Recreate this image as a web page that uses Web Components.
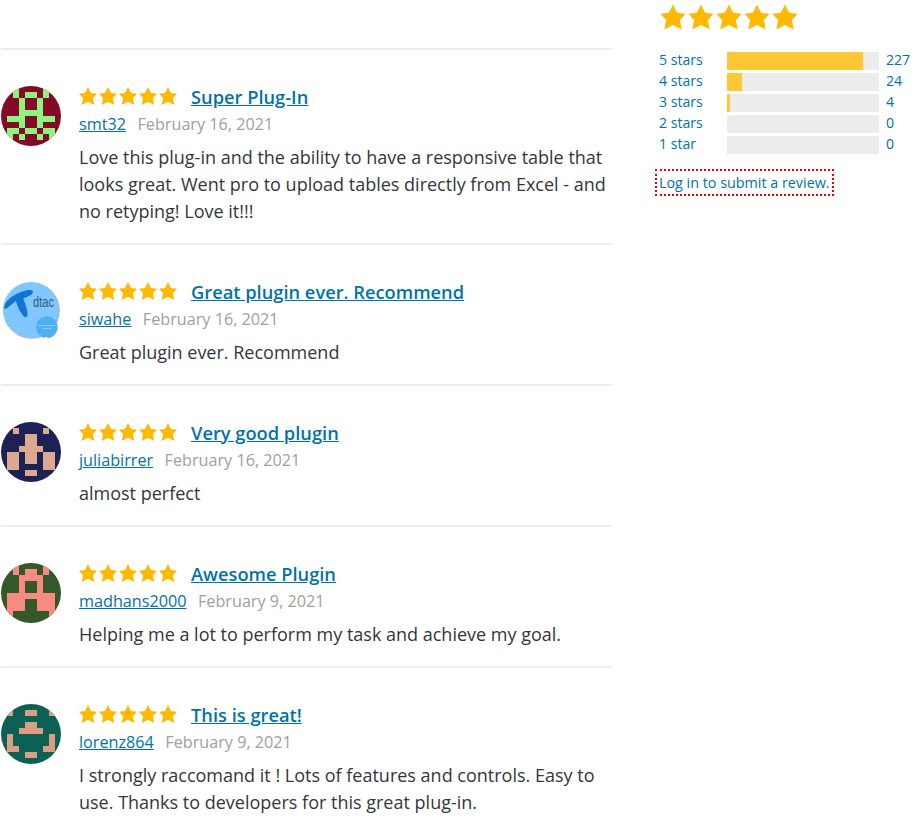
<!DOCTYPE html>
<html lang="en"><head><meta charset="utf-8"><title>Reviews</title>
<style>
html,body{margin:0;padding:0;background:#fff}
body{font-family:"Open Sans","Noto Sans",sans-serif;color:#32373c;overflow-x:hidden}
</style></head><body>
<reviews-page>
  <review-list slot="main">
    <review-item title-text="Super Plug-In" author="smt32" date="February 16, 2021">
      <grid-avatar slot="avatar" bg="#840b28" fg="#8cf47f" rows="..#....#..|..#.##.#..|...#..#...|...#..#...|...####...|.###..###.|...#..#...|.##.##.##.|.#.#..#.#.|.........."></grid-avatar>
      Love this plug-in and the ability to have a responsive table that looks great. Went pro to upload tables directly from Excel - and no retyping! Love it!!!
    </review-item>
    <review-item title-text="Great plugin ever. Recommend" author="siwahe" date="February 16, 2021">
      <logo-avatar slot="avatar"></logo-avatar>
      Great plugin ever. Recommend
    </review-item>
    <review-item title-text="Very good plugin" author="juliabirrer" date="February 16, 2021">
      <grid-avatar slot="avatar" bg="#1e2153" fg="#dca88f" rows="..........|..#....#..|....##....|....##....|...####...|.##.##.##.|.##.##.##.|.##....##.|....##....|.........."></grid-avatar>
      almost perfect
    </review-item>
    <review-item title-text="Awesome Plugin" author="madhans2000" date="February 9, 2021">
      <grid-avatar slot="avatar" bg="#33592b" fg="#f98a82" rows="..#....#..|..#.##.#..|...####...|...#..#...|...#..#...|.########.|.###..###.|.###..###.|.#......#.|.........."></grid-avatar>
      Helping me a lot to perform my task and achieve my goal.
    </review-item>
    <review-item title-text="This is great!" author="lorenz864" date="February 9, 2021">
      <grid-avatar slot="avatar" bg="#0d6054" fg="#d99e84" rows="..........|.#..##..#.|..........|....##....|...####...|.#......#.|.#......#.|.##....##.|....##....|.........."></grid-avatar>
      I strongly raccomand it ! Lots of features and controls. Easy to use. Thanks to developers for this great plug-in.
    </review-item>
  </review-list>
  <review-sidebar slot="side">
    <star-row size="28" pitch="28"></star-row>
    <rating-bar label="5 stars" count="227" width="136"></rating-bar>
    <rating-bar label="4 stars" count="24" width="15"></rating-bar>
    <rating-bar label="3 stars" count="4" width="3"></rating-bar>
    <rating-bar label="2 stars" count="0" width="0"></rating-bar>
    <rating-bar label="1 star" count="0" width="0"></rating-bar>
  </review-sidebar>
</reviews-page>
<script>
function def(name, css, html, init){
  customElements.define(name, class extends HTMLElement{
    connectedCallback(){
      if(this.shadowRoot) return;
      const r=this.attachShadow({mode:'open'});
      r.innerHTML='<style>'+css+'</style>'+(typeof html==='function'?html(this):html);
      if(init) init(this,r);
    }
  });
}
const A=(e,n)=>e.getAttribute(n)||'';
const STAR='M10 1l3 6 6 .75-4.12 4.62L16.25 19 10 15.75 3.75 19l1.37-6.63L1 7.75 7 7z';
def('reviews-page',
  ':host{display:grid;grid-template-columns:612px 253px;column-gap:47px;width:912px;align-items:start}',
  '<slot name="main"></slot><slot name="side"></slot>');
def('review-list',
  ':host{display:block;padding-top:48px;padding-left:1px;box-sizing:border-box;width:612px}','<slot></slot>');
def('review-item',
  `:host{display:flex;border-top:2px solid #eee;padding:36px 0 18px;font-size:18px;line-height:27px;color:#32373c;box-sizing:border-box}
   .av{flex:0 0 78px;height:60px}
   .body{flex:1;min-width:0}
   .top{display:flex;align-items:center;height:27px;margin-top:-2px}
   .top star-row{margin:0 0 4px -1px}
   .title{margin:0 0 2px 13px;font-size:18.27px;font-weight:600;color:#0073aa;text-decoration:underline}
   .meta{font-size:16.2px;line-height:27px;color:#a0a0a0;display:flex;gap:11.5px}
   .meta a{color:#0073aa;text-decoration:underline}
   .text{margin-top:6px}`,
  e=>`<div class="av"><slot name="avatar"></slot></div><div class="body">
    <div class="top"><star-row size="20" pitch="20"></star-row><a class="title" href="#">${A(e,'title-text')}</a></div>
    <div class="meta"><a href="#">${A(e,'author')}</a><span>${A(e,'date')}</span></div>
    <div class="text"><slot></slot></div></div>`);
def('star-row',
  ':host{display:inline-flex;flex:none;color:#ffb900}svg{display:block;flex:none}',
  e=>{const s=+A(e,'size');let o='';for(let i=0;i<5;i++)o+=`<svg width="${s}" height="${s}" viewBox="0 0 20 20"><path fill="currentColor" d="${STAR}"/></svg>`;return o;});
def('grid-avatar',
  ':host{display:block;width:60px;height:60px}svg{display:block}',
  e=>{const rows=A(e,'rows').split('|');let o='';rows.forEach((r,y)=>[...r].forEach((c,x)=>{if(c==='#')o+=`<rect x="${x*6}" y="${y*6}" width="6" height="6"/>`;}));
    const id='c'+Math.random().toString(36).slice(2);
    return `<svg width="60" height="60" viewBox="0 0 60 60"><defs><clipPath id="${id}"><circle cx="30" cy="30" r="30"/></clipPath></defs><g clip-path="url(#${id})"><rect width="60" height="60" fill="${A(e,'bg')}"/><g fill="${A(e,'fg')}" shape-rendering="crispEdges">${o}</g></g></svg>`;});
def('logo-avatar',
  `:host{display:block;width:60px;height:60px}svg{display:block}text{font-family:"Liberation Sans",sans-serif}`,
  `<svg width="60" height="60" viewBox="0 0 60 60">
    <circle cx="30.6" cy="29.6" r="28.2" fill="#b0b4b8"/>
    <circle cx="30" cy="29" r="28" fill="#80c6ff"/>
    <path d="M3 26.5C4 21 8 17 15.5 13C21 10 28 8 31 9.5C33 11 31.5 13.5 29 14.5C26 16 24 16.5 22.3 17.5C23.5 21 26 27 26.5 32C26.8 36 25 37 23.5 36C20 33 16.5 26 15 20C12 22 9 25 6.5 27C4.5 28 3 28 3 26.5Z" fill="#1274d4"/>
    <text x="32" y="26" font-size="14" fill="#2f5a7c" textLength="21" lengthAdjust="spacingAndGlyphs">dtac</text>
    <path d="M45.7 35.3a11 11 0 0 1 11 11c0 5-4 10-9 10.7l-3-1.2-2.5 1.2-2-1.5a11 11 0 0 1 5.5-20.2z" fill="#4cb0f2"/>
    <rect x="37.5" y="44" width="17" height="1" fill="#8fcff6"/>
    <rect x="42" y="47" width="8" height="1" fill="#8fcff6"/>
   </svg>`);
def('review-sidebar',
  `:host{display:block;padding-top:3px;font-size:14px}
   .stars{height:47px}
   .login{display:inline-block;margin:16px 0 0 -2px;padding:0 2px;outline:2px dotted #e00;color:#0073aa;font-size:14.33px;line-height:23px;text-decoration:none}`,
  `<div class="stars"></div>`,
  (e,r)=>{
    const s=e.querySelector('star-row');
    r.querySelector('.stars').appendChild(s);
    s.style.marginLeft='-0.4px';
    const list=document.createElement('div');
    [...e.querySelectorAll('rating-bar')].forEach(b=>list.appendChild(b));
    r.appendChild(list);
    const a=document.createElement('a');a.className='login';a.href='#';a.textContent='Log in to submit a review.';
    r.appendChild(a);
  });
def('rating-bar',
  `:host{display:grid;grid-template-columns:68px 152px 32px;align-items:center;height:21px;font-size:14.1px;color:#0073aa}
   .label,.n{padding-bottom:2px}
   .track{height:18px;background:#ececec;display:block}
   .fill{height:18px;background:#ffc733;display:block}
   .n{padding-left:7px;white-space:nowrap}`,
  e=>`<span class="label">${A(e,'label')}</span><span class="track"><span class="fill" style="width:${A(e,'width')}px"></span></span><span class="n">${A(e,'count')}</span>`);
</script>
</body></html>
